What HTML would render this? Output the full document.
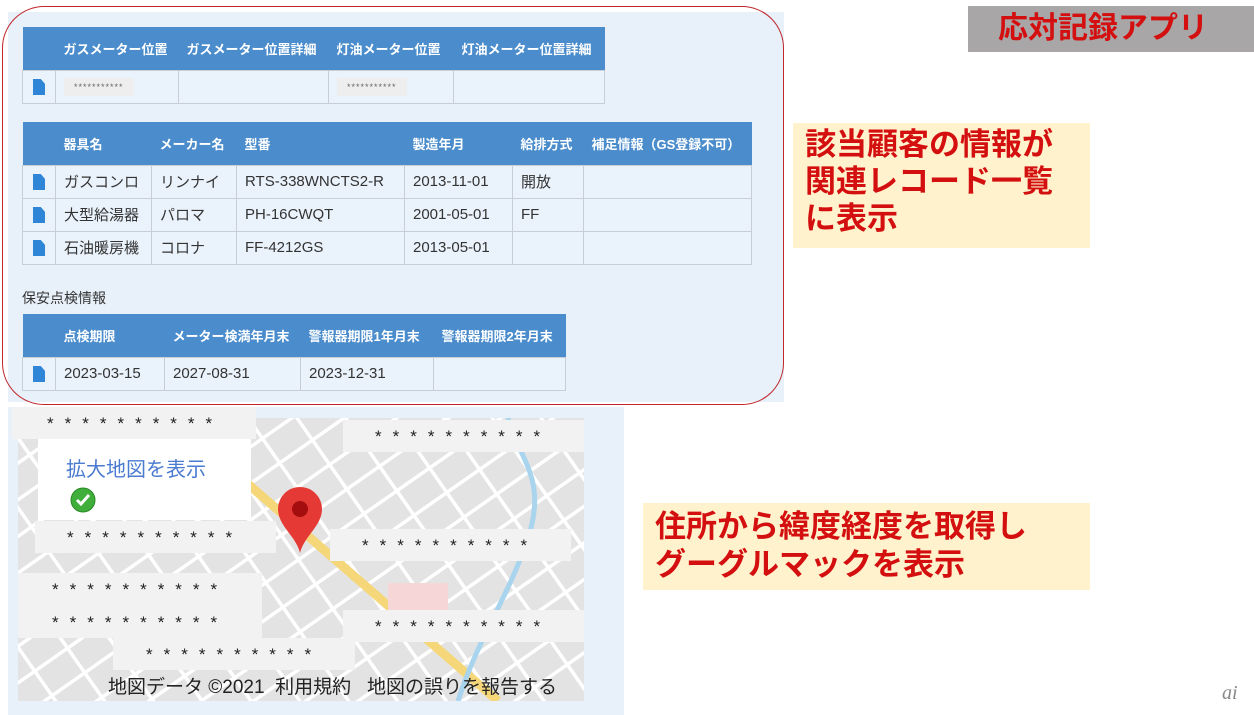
<!DOCTYPE html>
<html><head><meta charset="utf-8"><style>
*{margin:0;padding:0;box-sizing:border-box}
html,body{width:1254px;height:715px;overflow:hidden}
body{background:#fff;position:relative;font-family:"Liberation Sans","Noto Sans CJK JP",sans-serif}
.a{position:absolute}
table{border-collapse:collapse;position:absolute;font-size:15px;color:#333}
th{background:#4a8ccc;color:#fff;font-weight:bold;font-size:13px;text-align:left;padding:0 8px;height:43px;white-space:nowrap}
td{border:1px solid #c8ced6;background:#eaf2fb;height:33px;padding:0 8px;white-space:nowrap}
td.i{padding:0;text-align:center}
.doc{display:inline-block;width:12px;height:16px;background:#2f86d6;clip-path:polygon(0 0,65% 0,100% 30%,100% 100%,0 100%);vertical-align:middle}
.st{display:inline-block;background:#eee;font-size:9px;color:#666;padding:4px 10px;letter-spacing:1px}
.ast{position:absolute;background:#f2f2f2;font-size:17px;color:#222;letter-spacing:11px;white-space:nowrap;line-height:34px;overflow:hidden}
.call{position:absolute;background:#fff2cc;color:#d40f0f;font-weight:bold;font-size:31px;line-height:37px;padding-left:12px;white-space:nowrap;overflow:hidden}
</style></head><body>
<div class="a" style="left:8px;top:12px;width:776px;height:390px;background:#e8f1fa"></div>
<div class="a" style="left:2px;top:6px;width:782px;height:399px;border:1.5px solid #c0262b;border-radius:42px"></div>

<table style="left:22px;top:27px">
<tr><th style="width:33px"></th><th style="width:123px">ガスメーター位置</th><th style="width:150px">ガスメーター位置詳細</th><th style="width:125px">灯油メーター位置</th><th style="width:151px">灯油メーター位置詳細</th></tr>
<tr><td class="i"><span class="doc"></span></td><td><span class="st">***********</span></td><td></td><td><span class="st">***********</span></td><td></td></tr>
</table>

<table style="left:22px;top:122px">
<tr><th style="width:33px"></th><th style="width:96px">器具名</th><th style="width:85px">メーカー名</th><th style="width:168px">型番</th><th style="width:108px">製造年月</th><th style="width:71px">給排方式</th><th style="width:168px">補足情報（GS登録不可）</th></tr>
<tr><td class="i"><span class="doc"></span></td><td>ガスコンロ</td><td>リンナイ</td><td>RTS-338WNCTS2-R</td><td>2013-11-01</td><td>開放</td><td></td></tr>
<tr><td class="i"><span class="doc"></span></td><td>大型給湯器</td><td>パロマ</td><td>PH-16CWQT</td><td>2001-05-01</td><td>FF</td><td></td></tr>
<tr><td class="i"><span class="doc"></span></td><td>石油暖房機</td><td>コロナ</td><td>FF-4212GS</td><td>2013-05-01</td><td></td><td></td></tr>
</table>

<div class="a" style="left:22px;top:288px;font-size:14px;color:#333">保安点検情報</div>
<table style="left:22px;top:314px">
<tr><th style="width:33px"></th><th style="width:109px">点検期限</th><th style="width:136px">メーター検満年月末</th><th style="width:133px">警報器期限1年月末</th><th style="width:132px">警報器期限2年月末</th></tr>
<tr><td class="i"><span class="doc"></span></td><td>2023-03-15</td><td>2027-08-31</td><td>2023-12-31</td><td></td></tr>
</table>

<div class="a" style="left:8px;top:407px;width:616px;height:308px;background:#e8f1fa"></div>
<svg class="a" style="left:18px;top:418px" width="566" height="283" viewBox="0 0 566 283">
<rect width="566" height="283" fill="#e3e3e3"/>
<g stroke="#fff" stroke-width="3.5" transform="rotate(-35 283 140)">
<path d="M-300 -100H900M-300 -70H900M-300 -40H900M-300 -10H900M-300 20H900M-300 50H900M-300 80H900M-300 110H900M-300 140H900M-300 170H900M-300 200H900M-300 230H900M-300 260H900M-300 290H900M-300 320H900M-300 350H900M-300 380H900"/>
<path d="M-200 -300V600M-160 -300V600M-120 -300V600M-80 -300V600M-40 -300V600M0 -300V600M40 -300V600M80 -300V600M120 -300V600M160 -300V600M200 -300V600M240 -300V600M280 -300V600M320 -300V600M360 -300V600M400 -300V600M440 -300V600M480 -300V600M520 -300V600M560 -300V600M600 -300V600M640 -300V600M680 -300V600"/>
</g>
<path d="M200 40 L480 283" stroke="#f5d77a" stroke-width="9"/>
<path d="M490 0 C500 40 530 60 510 120 C490 180 460 220 440 283" stroke="#a9d4ee" stroke-width="5" fill="none"/>
<rect x="370" y="165" width="60" height="40" fill="#f6d6d6"/>
</svg>
<div class="a" style="left:38px;top:439px;width:213px;height:81px;background:#fff"></div>
<div class="a" style="left:66px;top:453px;font-size:20px;color:#4a7bd0">拡大地図を表示</div>
<svg class="a" style="left:70px;top:487px" width="26" height="26"><circle cx="13" cy="13" r="12" fill="#3fae3a" stroke="#2a8a26"/><path d="M7 13l4 4 8-9" stroke="#fff" stroke-width="3" fill="none"/></svg>
<div class="ast" style="left:12px;top:407px;width:244px;height:32px;padding-left:35px">**********</div>
<div class="ast" style="left:35px;top:521px;width:241px;height:32px;padding-left:32px">**********</div>
<div class="ast" style="left:343px;top:420px;width:241px;height:32px;padding-left:32px">**********</div>
<div class="ast" style="left:330px;top:529px;width:241px;height:32px;padding-left:32px">**********</div>
<div class="ast" style="left:18px;top:573px;width:244px;height:65px;padding-left:34px;line-height:33px">**********<br>**********</div>
<div class="ast" style="left:343px;top:610px;width:241px;height:32px;padding-left:32px">**********</div>
<div class="ast" style="left:113px;top:638px;width:242px;height:32px;padding-left:33px">**********</div>
<svg class="a" style="left:276px;top:486px" width="48" height="68" viewBox="0 0 48 68"><path d="M24 67 C20 50 2 40 2 23 A22 22 0 0 1 46 23 C46 40 28 50 24 67Z" fill="#e53935"/><circle cx="24" cy="23" r="8" fill="#a50e0e"/></svg>
<div class="a" style="left:108px;top:676px;font-size:19px;line-height:24px;color:#222;white-space:nowrap">地図データ ©2021 &nbsp;利用規約 &nbsp;&nbsp;地図の誤りを報告する</div>

<div class="a" style="left:968px;top:6px;width:286px;height:46px;background:#a8a6a6;color:#d40f0f;font-weight:bold;font-size:30px;line-height:46px;padding-left:30px;white-space:nowrap;overflow:hidden">応対記録アプリ</div>
<div class="call" style="left:793px;top:123px;width:297px;height:125px;padding-top:3px">該当顧客の情報が<br>関連レコード一覧<br>に表示</div>
<div class="call" style="left:643px;top:503px;width:447px;height:87px;padding-top:5px;line-height:38px">住所から緯度経度を取得し<br>グーグルマックを表示</div>
<div class="a" style="left:1222px;top:682px;font-size:20px;line-height:22px;font-style:italic;color:#888;font-family:'Liberation Serif',serif">ai</div>
</body></html>
